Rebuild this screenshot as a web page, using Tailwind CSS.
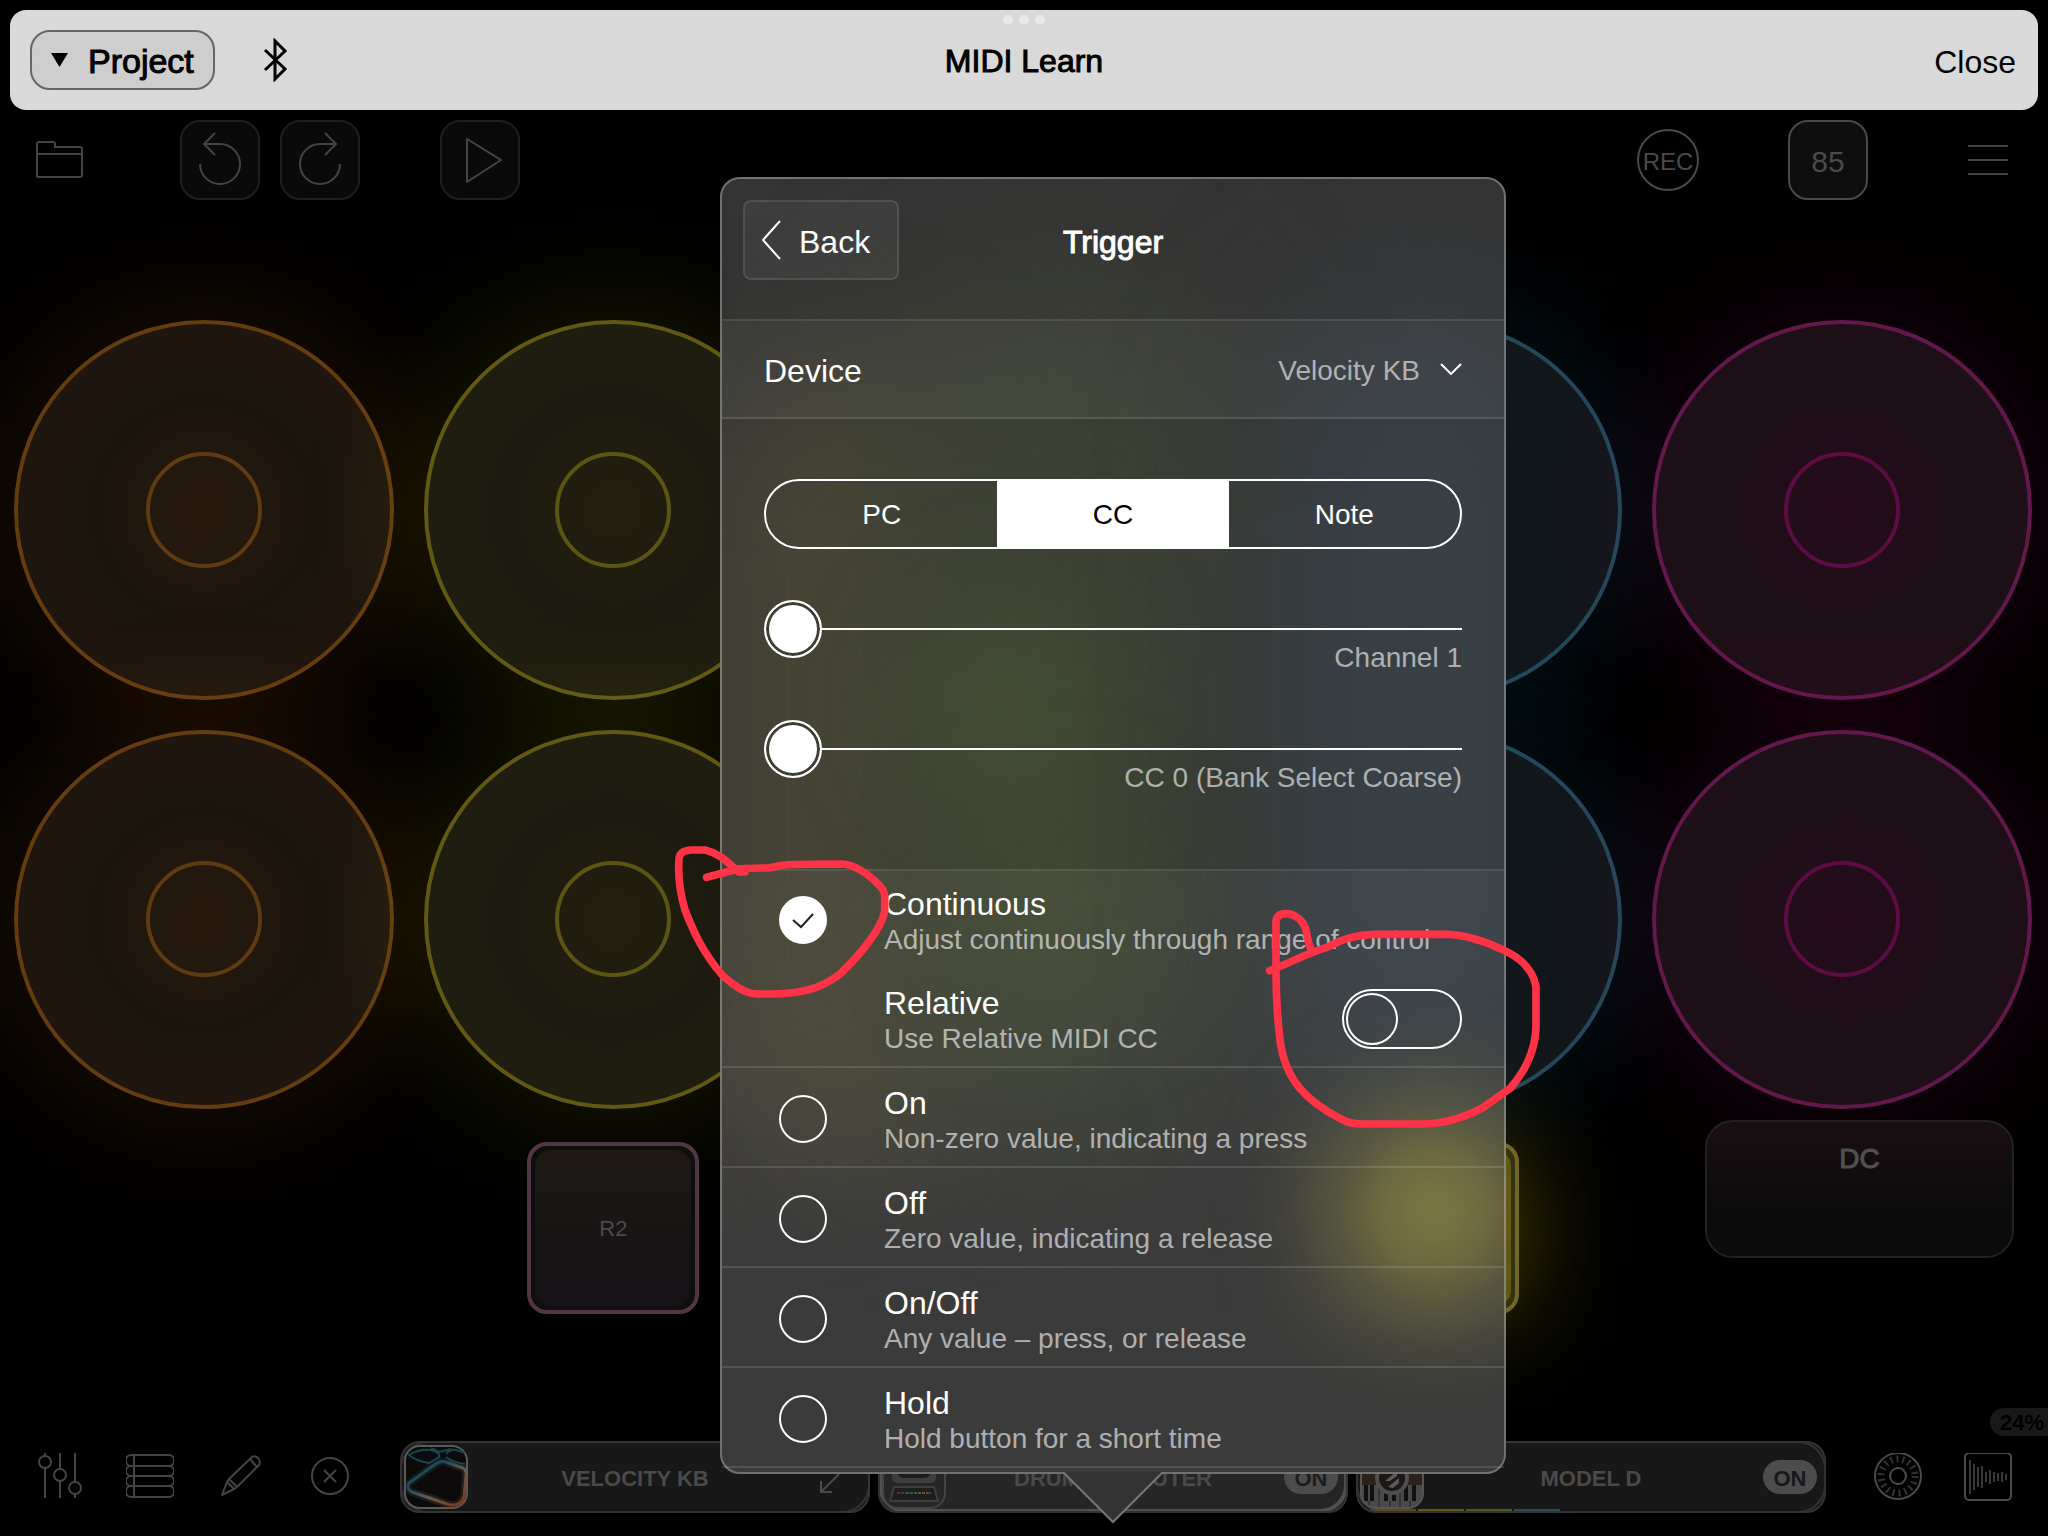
<!DOCTYPE html>
<html lang="en">
<head>
    <meta charset="UTF-8">
    <meta name="viewport" content="width=device-width, initial-scale=1.0">
    <title>MIDI Learn</title>
    <script src="https://cdn.jsdelivr.net/npm/@tailwindcss/browser@4"></script>
</head>
<body class="relative flex min-h-screen flex-col overflow-x-hidden bg-black font-['Liberation_Sans',Arial,sans-serif] text-[#4a4a4a]">

    <!-- Header -->
    <header class="relative mx-[10px] mt-[10px] grid h-[100px] grid-cols-[1fr_auto_1fr] items-center rounded-2xl bg-[#d9d9d9] px-5 text-[32px] text-black">
        <div class="flex items-center gap-[46px]">
            <button class="flex h-[60px] items-center gap-5 rounded-[20px] border-2 border-[#666] bg-[#cecece] px-[19px] text-[34px] [-webkit-text-stroke:1px_currentColor]">
                <svg class="h-[14px] w-[17px]" viewBox="0 0 17 14"><path d="M0 0h17L8.5 14z"/></svg>
                <span class="pt-[2px]">Project</span>
            </button>
            <button aria-label="Bluetooth">
                <svg class="h-[44px] w-[28px]" viewBox="0 0 28 44" fill="none" stroke="#000" stroke-width="3"><path d="M4 12l20 19-10 10V3l10 10L4 32"/></svg>
            </button>
        </div>
        <h1 class="pt-[2px] [-webkit-text-stroke:1px_currentColor]">MIDI Learn</h1>
        <button class="justify-self-end pt-1 pr-[2px]">Close</button>
        <div class="absolute top-[5px] left-1/2 flex -translate-x-1/2 gap-[6px]">
            <span class="size-[10px] rounded-full bg-[#e8e8e8]"></span>
            <span class="size-[10px] rounded-full bg-[#e8e8e8]"></span>
            <span class="size-[10px] rounded-full bg-[#e8e8e8]"></span>
        </div>
    </header>

    <!-- Toolbar -->
    <nav class="mt-[10px] flex h-20 items-center pr-10 pl-9">
        <button aria-label="Open folder">
            <svg class="size-12" viewBox="0 0 48 48" fill="none" stroke="#444" stroke-width="2"><path d="M1 41V8q0-2 2-2h14q2 0 2 2v3h25q2 0 2 2v26q0 2-2 2H2q-1 0-1-2M1 18h45"/></svg>
        </button>
        <div class="ml-24 flex gap-5">
            <button aria-label="Undo" class="size-20 rounded-[20px] border-2 border-[#1f1f1f] bg-[#0a0a0a]">
                <svg class="size-[76px]" viewBox="0 0 76 76" fill="none" stroke="#444" stroke-width="2"><path d="M18 42a20 20 0 1 0 20-20H22M33 11L22 22l11 11"/></svg>
            </button>
            <button aria-label="Redo" class="size-20 rounded-[20px] border-2 border-[#1f1f1f] bg-[#0a0a0a]">
                <svg class="size-[76px]" viewBox="0 0 76 76" fill="none" stroke="#444" stroke-width="2"><path d="M58 42a20 20 0 1 1-20-20h16M43 11l11 11-11 11"/></svg>
            </button>
        </div>
        <button aria-label="Play" class="ml-20 size-20 rounded-[20px] border-2 border-[#1f1f1f] bg-[#0a0a0a]">
            <svg class="size-[76px]" viewBox="0 0 76 76" fill="none" stroke="#444" stroke-width="2" stroke-linejoin="round"><path d="M25 17v43l34-22z"/></svg>
        </button>
        <button class="ml-auto size-[62px] rounded-full border-2 pt-1 text-2xl">
            <span class="-mx-2">REC</span>
        </button>
        <button class="ml-[89px] size-20 rounded-[20px] border-2 bg-[#0e0e0e] pt-[2px] text-[30px]">85</button>
        <button aria-label="Menu" class="ml-[100px]">
            <svg class="h-8 w-10" viewBox="0 0 40 32" stroke="#444" stroke-width="2"><path d="M0 2h40M0 16h40M0 30h40"/></svg>
        </button>
    </nav>

    <!-- Loop donuts -->
    <main class="mt-[120px] pr-4 pl-[14px]">
        <div class="grid grid-cols-5 gap-[30px]">
            <div class="grid aspect-square place-items-center rounded-full border-4 border-[#653b10] bg-[radial-gradient(circle,#281b0d,#1c150e_40%,#20170f)] shadow-[0_0_140px_#ff8a1a24]">
                <div class="size-[116px] rounded-full border-4 border-[#603a10]"></div>
            </div>
            <div class="grid aspect-square place-items-center rounded-full border-4 border-[#615814] bg-[radial-gradient(circle,#24200e,#1c1a0e_40%,#21200f)] shadow-[0_0_140px_#e6dc0024]">
                <div class="size-[116px] rounded-full border-4 border-[#5c5412]"></div>
            </div>
            <div class="grid aspect-square place-items-center rounded-full border-4 border-[#3c5a1c] bg-[#18200f] shadow-[0_0_140px_#80e60024]">
                <div class="size-[116px] rounded-full border-4 border-[#3c5a1c]"></div>
            </div>
            <div class="grid aspect-square place-items-center rounded-full border-4 border-[#22495a] bg-[#11171b] shadow-[0_0_140px_#1aa0e624]">
                <div class="size-[116px] rounded-full border-4 border-[#22495a]"></div>
            </div>
            <div class="grid aspect-square place-items-center rounded-full border-4 border-[#62184b] bg-[radial-gradient(circle,#280b1e,#1c0f17_40%,#1f1018)] shadow-[0_0_140px_#e6009020]">
                <div class="size-[116px] rounded-full border-4 border-[#5c0c42]"></div>
            </div>
            <div class="grid aspect-square place-items-center rounded-full border-4 border-[#653b10] bg-[radial-gradient(circle,#281b0d,#1c150e_40%,#20170f)] shadow-[0_0_140px_#ff8a1a24]">
                <div class="size-[116px] rounded-full border-4 border-[#603a10]"></div>
            </div>
            <div class="grid aspect-square place-items-center rounded-full border-4 border-[#615814] bg-[radial-gradient(circle,#24200e,#1c1a0e_40%,#21200f)] shadow-[0_0_140px_#e6dc0024]">
                <div class="size-[116px] rounded-full border-4 border-[#5c5412]"></div>
            </div>
            <div class="grid aspect-square place-items-center rounded-full border-4 border-[#3c5a1c] bg-[#18200f] shadow-[0_0_140px_#80e60024]">
                <div class="size-[116px] rounded-full border-4 border-[#3c5a1c]"></div>
            </div>
            <div class="grid aspect-square place-items-center rounded-full border-4 border-[#22495a] bg-[#11171b] shadow-[0_0_140px_#1aa0e624]">
                <div class="size-[116px] rounded-full border-4 border-[#22495a]"></div>
            </div>
            <div class="grid aspect-square place-items-center rounded-full border-4 border-[#62184b] bg-[radial-gradient(circle,#280b1e,#1c0f17_40%,#1f1018)] shadow-[0_0_140px_#e6009020]">
                <div class="size-[116px] rounded-full border-4 border-[#5c0c42]"></div>
            </div>
        </div>

        <!-- Pads -->
        <div class="mt-[11px] grid grid-cols-5 gap-[30px]">
            <button class="col-start-2 mt-[22px] size-[172px] justify-self-center rounded-[20px] border-4 border-[#533646] bg-[#0e0e0b] p-1">
                <span class="grid size-full place-items-center rounded-2xl bg-linear-to-b from-[#1e1914] to-[#151116] text-[22px]">R2</span>
            </button>
            <button aria-label="Pad" class="col-start-4 mt-[22px] size-[172px] justify-self-center rounded-[20px] border-4 border-[#716722] bg-[#35300f] p-1 shadow-[0_0_110px_#e6c80058]">
                <span class="block size-full rounded-2xl bg-[#635a12]"></span>
            </button>
            <button class="col-start-5 mr-[18px] flex h-[138px] w-[309px] justify-center justify-self-end rounded-[28px] border-2 border-[#222] bg-linear-to-b from-[#1a0e14] to-[#0b0b0b] to-70% pt-4 text-[28px] text-[#505050] [-webkit-text-stroke:1px_currentColor]">DC</button>
        </div>
    </main>

    <!-- Footer -->
    <footer class="relative mt-auto mb-[23px] flex h-[72px] items-center px-9">
        <div class="flex gap-[42px]">
            <button aria-label="Mixer">
                <svg class="size-12" viewBox="0 0 48 48" fill="none" stroke="#444" stroke-width="2"><path d="M9 0v3M9 15v30M24 0v16M24 28v17M39 0v29M39 41v4"/><circle cx="9" cy="9" r="6"/><circle cx="24" cy="22" r="6"/><circle cx="39" cy="35" r="6"/></svg>
            </button>
            <button aria-label="Clips">
                <svg class="size-12" viewBox="0 0 48 48" fill="none" stroke="#444" stroke-width="2"><rect x="0" y="2" width="48" height="11" rx="5"/><rect x="0" y="13" width="48" height="10" rx="5"/><rect x="0" y="23" width="48" height="10" rx="5"/><rect x="0" y="33" width="48" height="11" rx="5"/><path d="M8 2v42"/></svg>
            </button>
            <button aria-label="Edit">
                <svg class="size-12" viewBox="0 0 48 48" fill="none" stroke="#444" stroke-width="2" stroke-linejoin="round"><path d="M6 42l5-13 7 7zM13 26L36 4q3-2 6 1 3 4 1 7L21 34zM34 6l7 8M11 29l2-3M18 36l3-2"/></svg>
            </button>
            <button aria-label="Clear">
                <svg class="size-12" viewBox="0 0 48 48" fill="none" stroke="#444" stroke-width="2"><circle cx="24" cy="23" r="18"/><path d="M18 17l12 12M30 17L18 29"/></svg>
            </button>
        </div>

        <!-- Channel strips -->
        <div class="mr-12 ml-[46px] grid flex-1 grid-cols-3 gap-2 text-[22px] font-bold">
            <div class="relative flex h-[72px] items-center justify-center overflow-hidden rounded-[20px] border-2 border-[#333] bg-[#181818]">
                <div class="absolute inset-[-2px] rounded-[28px] border-2 border-[#333]"></div>
                <svg class="absolute left-[2px] size-16" viewBox="0 0 64 64" fill="none">
                    <defs><linearGradient id="neon" x1="0" y1="0" x2="1" y2="1"><stop offset=".3" stop-color="#1d4a55"/><stop offset=".6" stop-color="#6a5a52"/><stop offset="1" stop-color="#7a3516"/></linearGradient></defs>
                    <rect x="1" y="1" width="62" height="62" rx="15" fill="#0c0a0a" stroke="#5a5a5a" stroke-width="2"/>
                    <path d="M30 20q6-5 12-3l17 6q4 2 3 8l-2 21q-3 9-14 8L8 47q-6-3-3-9z" stroke="url(#neon)" stroke-width="8" opacity=".25"/>
                    <path d="M30 20q6-5 12-3l17 6q4 2 3 8l-2 21q-3 9-14 8L8 47q-6-3-3-9z" stroke="url(#neon)" stroke-width="3"/>
                    <path d="M5 10q10-6 22-5 10 3 8 7l-10 6Q12 16 5 10zM42 9q4-5 10-4l9 3M42 12q8 6 19 7M27 3l8 4 12-3" stroke="#164654" stroke-width="2"/>
                </svg>
                <span class="pt-[2px]">VELOCITY KB</span>
                <svg class="absolute right-[28px] bottom-[18px] size-5" viewBox="0 0 20 20" fill="none" stroke="#4a4a4a" stroke-width="2"><path d="M19 1L1 19M1 8v11h11"/></svg>
            </div>
            <div class="relative flex h-[72px] items-center justify-center overflow-hidden rounded-[20px] border-2 border-[#333] bg-[#262626]">
                <div class="absolute inset-[-2px] rounded-[28px] border-4 border-[#505050]"></div>
                <svg class="absolute left-[2px] size-16" viewBox="0 0 64 64">
                    <rect x="1" y="1" width="62" height="62" rx="15" fill="#262626" stroke="#444" stroke-width="2"/>
                    <rect x="10" y="6" width="44" height="32" rx="5" fill="#3c3f3e"/><rect x="14" y="10" width="36" height="23" rx="8" fill="#1c1c1c"/>
                    <path d="M12 42h40l4 14H8z" fill="#1e1e1e" stroke="#3c3f3e" stroke-width="2"/>
                    <path d="M15 48h9" stroke="#5c3030" stroke-width="2" stroke-dasharray="3 1"/><path d="M24 48h12" stroke="#2f5a50" stroke-width="2" stroke-dasharray="3 1"/><path d="M36 48h13" stroke="#66552a" stroke-width="2" stroke-dasharray="3 1"/>
                </svg>
                <span class="pt-[2px]">DRUM COMPUTER</span>
                <button class="absolute right-2 h-[34px] w-[54px] rounded-full bg-[#4c4c4c] pt-[2px] text-[#1c1c1c]">ON</button>
            </div>
            <div class="relative flex h-[72px] items-center justify-center overflow-hidden rounded-[20px] border-2 border-[#333] bg-[#181818]">
                <div class="absolute inset-[-2px] rounded-[28px] border-2 border-[#333]"></div>
                <div class="absolute bottom-[-2px] left-3 flex gap-[2px]">
                    <span class="h-1 w-[46px] bg-[#6b4117]"></span>
                    <span class="h-1 w-[46px] bg-[#5f5a17]"></span>
                    <span class="h-1 w-[46px] bg-[#48601f]"></span>
                    <span class="h-1 w-[46px] bg-[#23505f]"></span>
                </div>
                <svg class="absolute left-[2px] size-16" viewBox="0 0 64 64">
                    <clipPath id="tile"><rect x="1" y="1" width="62" height="62" rx="15"/></clipPath>
                    <g clip-path="url(#tile)"><rect width="64" height="64" fill="#2c211b"/><path d="M0 40h64v24H0z" fill="#494949"/><path d="M6 40v16M12 40v16M26 40v16M34 40v16M46 40v16M54 40v16" stroke="#111" stroke-width="4"/><path d="M9 56v8M19 40v24M30 56v8M40 40v24M50 56v8" stroke="#222"/></g>
                    <circle cx="32" cy="33" r="15" fill="#1d1815" stroke="#4e4e4e" stroke-width="4"/><path d="M25 36l12-10v5l-7 5zM28 42l11-9v5l-6 5z" fill="#5a5a5a"/>
                    <rect x="1" y="1" width="62" height="62" rx="15" fill="none" stroke="#555" stroke-width="2"/>
                </svg>
                <span class="pt-[2px]">MODEL D</span>
                <button class="absolute right-[7px] h-[34px] w-[54px] rounded-full bg-[#4c4c4c] pt-[2px] text-[#181818]">ON</button>
            </div>
        </div>

        <div class="flex gap-[42px]">
            <button aria-label="Dial">
                <svg class="size-12" viewBox="0 0 48 48" fill="none" stroke="#4a4a4a" stroke-width="2"><circle cx="24" cy="23" r="23"/><circle cx="24" cy="23" r="8"/><circle cx="24" cy="23" r="17" stroke="#333" stroke-width="7" stroke-dasharray="2 4"/></svg>
            </button>
            <button aria-label="Waveform">
                <svg class="size-12" viewBox="0 0 48 48" fill="none" stroke="#4a4a4a" stroke-width="2"><rect x="1" y="0" width="46" height="47" rx="4"/><path stroke="#383838" d="M6 7v34M10 11v26M14 14v20M18 13v22M22 19v10M26 17v14M30 19v10M34 20v8M38 19v10M42 21v6"/></svg>
            </button>
        </div>
        <span class="absolute -top-[33px] right-0 h-7 w-[58px] rounded-l-full bg-[#191919] pl-[10px] text-[22px] leading-[30px] font-bold whitespace-nowrap text-black">24%</span>
    </footer>

    <!-- Trigger popover -->
    <section class="absolute top-[177px] left-[720px] w-[786px] text-white">
        <!-- Blurred glow of what lies behind -->
        <div class="absolute inset-0 overflow-hidden rounded-[20px] bg-[#343434]">
            <div class="absolute top-[190px] -left-[20px] h-[800px] w-[260px] rounded-full bg-[#524d38]/70 blur-[70px]"></div>
            <div class="absolute top-[100px] left-[140px] h-[880px] w-[380px] rounded-full bg-[#3e4533]/80 blur-[80px]"></div>
            <div class="absolute top-[440px] left-[200px] size-[190px] rounded-full bg-[#485832]/60 blur-[60px]"></div>
            <div class="absolute top-[640px] left-[240px] size-[190px] rounded-full bg-[#485832]/40 blur-[60px]"></div>
            <div class="absolute top-[120px] left-[560px] h-[820px] w-[280px] rounded-full bg-[#39444c]/80 blur-[80px]"></div>
            <div class="absolute top-[944px] left-[624px] size-[180px] rounded-full bg-[#99903f]/90 blur-[60px]"></div>
        </div>

        <div class="relative rounded-[20px] border-2 border-white/30 text-[32px]">
            <div class="grid h-[142px] grid-cols-[1fr_auto_1fr] items-start border-b-2 border-white/12 px-[21px] pt-[21px]">
                <button class="flex h-20 w-[156px] items-center gap-[18px] rounded-lg border-2 border-white/10 bg-white/5 pl-4">
                    <svg class="h-10 w-5" viewBox="0 0 20 40" fill="none" stroke="#fff" stroke-width="2"><path d="M19 1L2 20l17 19"/></svg>
                    <span class="pt-1">Back</span>
                </button>
                <h2 class="leading-[84px] [-webkit-text-stroke:1px_currentColor]">Trigger</h2>
            </div>

            <div class="flex h-[98px] items-center justify-between border-b-2 border-white/12 bg-white/4 px-[42px]">
                <label for="device" class="pt-1">Device</label>
                <div class="flex items-center gap-5">
                    <select id="device" class="w-[200px] appearance-none bg-transparent pt-1 text-right text-[28px] text-white/60 [text-align-last:right]">
                        <option>Velocity KB</option>
                    </select>
                    <svg class="h-3 w-[22px]" viewBox="0 0 22 12" fill="none" stroke="#fff" stroke-width="2"><path d="M1 1l10 10L21 1"/></svg>
                </div>
            </div>

            <div class="h-[452px] border-b-2 border-white/12 px-[42px] pt-[60px] text-[28px]">
                <div class="grid h-[70px] grid-cols-3 overflow-hidden rounded-full border-2 border-white">
                    <button class="pt-[2px]">PC</button>
                    <button class="bg-white pt-[2px] text-black" aria-pressed="true">CC</button>
                    <button class="pt-[2px]">Note</button>
                </div>
                <div class="mt-[51px]">
                    <input type="range" min="1" max="16" value="1" id="channel" class="block h-[58px] w-full appearance-none bg-transparent [&::-webkit-slider-runnable-track]:h-[58px] [&::-webkit-slider-runnable-track]:bg-[linear-gradient(#fff,#fff)] [&::-webkit-slider-runnable-track]:bg-[length:100%_2px] [&::-webkit-slider-runnable-track]:bg-center [&::-webkit-slider-runnable-track]:bg-no-repeat [&::-webkit-slider-thumb]:size-[58px] [&::-webkit-slider-thumb]:appearance-none [&::-webkit-slider-thumb]:rounded-full [&::-webkit-slider-thumb]:border-2 [&::-webkit-slider-thumb]:border-white [&::-webkit-slider-thumb]:bg-white [&::-webkit-slider-thumb]:shadow-[inset_0_0_0_3px_#3e3f34]">
                    <label for="channel" class="-mt-4 block text-right leading-8 text-white/60">Channel 1</label>
                </div>
                <div class="mt-[46px]">
                    <input type="range" min="0" max="127" value="0" id="cc" class="block h-[58px] w-full appearance-none bg-transparent [&::-webkit-slider-runnable-track]:h-[58px] [&::-webkit-slider-runnable-track]:bg-[linear-gradient(#fff,#fff)] [&::-webkit-slider-runnable-track]:bg-[length:100%_2px] [&::-webkit-slider-runnable-track]:bg-center [&::-webkit-slider-runnable-track]:bg-no-repeat [&::-webkit-slider-thumb]:size-[58px] [&::-webkit-slider-thumb]:appearance-none [&::-webkit-slider-thumb]:rounded-full [&::-webkit-slider-thumb]:border-2 [&::-webkit-slider-thumb]:border-white [&::-webkit-slider-thumb]:bg-white [&::-webkit-slider-thumb]:shadow-[inset_0_0_0_3px_#3e3f34]">
                    <label for="cc" class="-mt-4 block text-right leading-8 text-white/60">CC 0 (Bank Select Coarse)</label>
                </div>
            </div>

            <div class="rounded-b-[18px] bg-white/4 pb-1">
                <label class="flex h-[97px] items-center gap-[57px] pl-[57px]">
                    <span class="relative size-12">
                        <input type="radio" name="mode" checked class="block size-12 appearance-none rounded-full border-2 border-white checked:bg-white">
                        <svg class="absolute inset-0 size-12" viewBox="0 0 48 48" fill="none" stroke="#222" stroke-width="2"><path d="M14 24l8 7 12-13"/></svg>
                    </span>
                    <span class="pt-1 leading-[34px]">Continuous<br><span class="text-[28px] text-white/60">Adjust continuously through range of control</span></span>
                </label>
                <label class="flex h-[100px] items-center justify-between border-b-2 border-white/12 pt-1 pr-[42px] pl-[162px]">
                    <span class="pt-1 leading-[34px]">Relative<br><span class="text-[28px] text-white/60">Use Relative MIDI CC</span></span>
                    <input type="checkbox" role="switch" class="h-[60px] w-[120px] appearance-none rounded-full border-2 border-white p-[2px] before:block before:size-[52px] before:rounded-full before:border-2 before:border-white">
                </label>
                <label class="flex h-[100px] items-center gap-[57px] border-b-2 border-white/12 pt-1 pl-[57px]">
                    <input type="radio" name="mode" class="size-12 appearance-none rounded-full border-2 border-white checked:bg-white">
                    <span class="pt-1 leading-[34px]">On<br><span class="text-[28px] text-white/60">Non-zero value, indicating a press</span></span>
                </label>
                <label class="flex h-[100px] items-center gap-[57px] border-b-2 border-white/12 pt-1 pl-[57px]">
                    <input type="radio" name="mode" class="size-12 appearance-none rounded-full border-2 border-white checked:bg-white">
                    <span class="pt-1 leading-[34px]">Off<br><span class="text-[28px] text-white/60">Zero value, indicating a release</span></span>
                </label>
                <label class="flex h-[100px] items-center gap-[57px] border-b-2 border-white/12 pt-1 pl-[57px]">
                    <input type="radio" name="mode" class="size-12 appearance-none rounded-full border-2 border-white checked:bg-white">
                    <span class="pt-1 leading-[34px]">On/Off<br><span class="text-[28px] text-white/60">Any value – press, or release</span></span>
                </label>
                <label class="flex h-[100px] items-center gap-[57px] border-b-2 border-white/12 pt-1 pl-[57px]">
                    <input type="radio" name="mode" class="size-12 appearance-none rounded-full border-2 border-white checked:bg-white">
                    <span class="pt-1 leading-[34px]">Hold<br><span class="text-[28px] text-white/60">Hold button for a short time</span></span>
                </label>
            </div>
        </div>

        <!-- Popover arrow -->
        <svg class="absolute top-full left-1/2 -mt-[2px] h-[52px] w-[102px] -translate-x-1/2" viewBox="0 0 102 52"><path d="M1 0l50 50L101 0z" fill="#333"/><path d="M1 0l50 50L101 0" fill="none" stroke="#777" stroke-width="2"/></svg>

        <!-- Pen marks -->
        <svg class="pointer-events-none absolute top-[643px] -left-[60px] h-[300px] w-[460px]" viewBox="0 0 1380 900" fill="none" stroke="#ff3345" stroke-width="23" stroke-linecap="round" stroke-linejoin="round">
            <path d="M140 172L232 148Q250 144 325 144C350 141 350 137 375 135Q400 132 545 132C590 134 628 165 660 198Q674 214 674 230V270C670 320 600 405 540 462C480 510 410 522 330 522H290C250 520 215 490 187 466C130 400 100 335 75 270C60 220 53 170 57 115Q60 91 95 90H135C180 100 205 130 237 156H255"/>
        </svg>
        <svg class="pointer-events-none absolute top-[703px] left-[480px] h-[500px] w-[380px]" viewBox="0 0 1140 1500" fill="none" stroke="#ff3345" stroke-width="23" stroke-linecap="round" stroke-linejoin="round">
            <path d="M209 272C280 245 300 228 380 202Q450 164 520 163H740C800 164 860 185 920 215C970 240 1000 275 1008 320V440C1006 520 970 580 930 625L850 682C790 715 730 732 660 732H480Q450 731 425 718C320 665 255 600 240 480Q228 380 228 260V125Q230 101 258 101C290 103 310 125 318 150C325 185 325 195 336 212"/>
        </svg>
    </section>

</body>
</html>
